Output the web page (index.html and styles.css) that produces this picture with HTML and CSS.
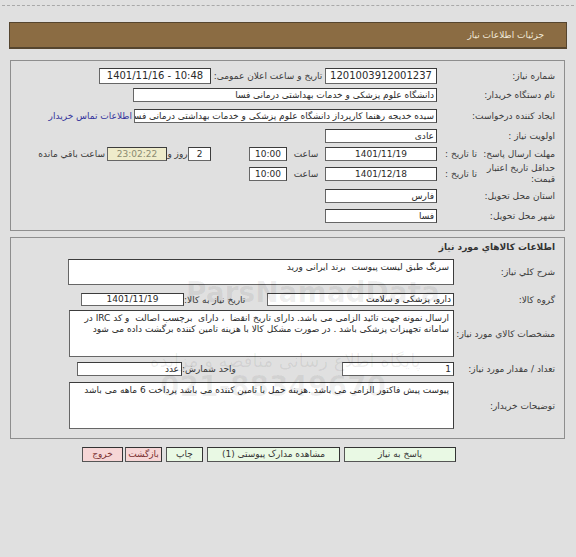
FILE: index.html
```html
<!DOCTYPE html>
<html lang="fa" dir="rtl">
<head>
<meta charset="utf-8">
<title>جزئیات اطلاعات نیاز</title>
<link rel="stylesheet" href="styles.css">
</head>
<body>
<div class="topline"></div>
<div class="header">جزئیات اطلاعات نیاز</div>

<section class="panel p1">
  <div class="row h19">
    <div class="lbl">شماره نیاز:</div>
    <div class="cell">
      <span class="box tall w112 c">1201003912001237</span>
      <span class="txt w114 c">تاریخ و ساعت اعلان عمومی:</span>
      <span class="box tall w112 c ltr">1401/11/16 - 10:48</span>
    </div>
  </div>
  <div class="row h20">
    <div class="lbl">نام دستگاه خریدار:</div>
    <div class="cell">
      <span class="box w304">دانشگاه علوم پزشکی و خدمات بهداشتی درمانی فسا</span>
    </div>
  </div>
  <div class="row h21">
    <div class="lbl">ایجاد کننده درخواست:</div>
    <div class="cell">
      <span class="box w303">سیده خدیجه رهنما کارپرداز دانشگاه علوم پزشکی و خدمات بهداشتی درمانی فسا</span>
      <a class="link" href="#">اطلاعات تماس خریدار</a>
    </div>
  </div>
  <div class="row h19">
    <div class="lbl">اولویت نیاز :</div>
    <div class="cell">
      <span class="box w112">عادی</span>
    </div>
  </div>
  <div class="row h18">
    <div class="lbl split"><span>مهلت ارسال پاسخ:</span><span>تا تاریخ :</span></div>
    <div class="cell">
      <span class="box w112 c">1401/11/19</span>
      <span class="txt w38 c">ساعت</span>
      <span class="box w38 c">10:00</span>
      <span class="spacer"></span>
      <span class="box w23 c">2</span>
      <span class="txt w21 c">روز و</span>
      <span class="box w60 c remain">23:02:22</span>
      <span class="txt pad2">ساعت باقي مانده</span>
    </div>
  </div>
  <div class="row h22">
    <div class="lbl split"><span class="two">حداقل تاریخ اعتبار<br>قیمت:</span><span>تا تاریخ :</span></div>
    <div class="cell">
      <span class="box w112 c">1401/12/18</span>
      <span class="txt w38 c">ساعت</span>
      <span class="box w38 c">10:00</span>
    </div>
  </div>
  <div class="row h22">
    <div class="lbl">استان محل تحویل:</div>
    <div class="cell">
      <span class="box w112">فارس</span>
    </div>
  </div>
  <div class="row h18">
    <div class="lbl">شهر محل تحویل:</div>
    <div class="cell">
      <span class="box w112">فسا</span>
    </div>
  </div>
</section>

<section class="panel p2">
  <div class="title">اطلاعات کالاهاي مورد نياز</div>
  <div class="row2 mt2">
    <div class="lbl">شرح کلي نياز:</div>
    <div class="cell">
      <div class="area w386 h26">سرنگ طبق لیست پیوست&nbsp; برند ایرانی ورید</div>
    </div>
  </div>
  <div class="row2 mt8">
    <div class="lbl">گروه کالا:</div>
    <div class="cell">
      <span class="box w187 h13">دارو، پزشکی و سلامت</span>
      <span class="txt w83 l">تاریخ نیاز به کالا:</span>
      <span class="box w103 h13 c">1401/11/19</span>
    </div>
  </div>
  <div class="row2 mt4">
    <div class="lbl">مشخصات کالاي مورد نياز:</div>
    <div class="cell">
      <div class="area w385 h47">ارسال نمونه جهت تائید الزامی می باشد. دارای تاریخ انقضا&nbsp; ، دارای&nbsp; برچسب اصالت&nbsp; و کد IRC در<br>سامانه تجهیزات پزشکی باشد . در صورت مشکل کالا با هزینه تامین کننده برگشت داده می شود</div>
    </div>
  </div>
  <div class="row2 mt5">
    <div class="lbl">تعداد / مقدار مورد نیاز:</div>
    <div class="cell">
      <span class="box w112">1</span>
      <span class="txt w160 l">واحد شمارش:</span>
      <span class="box w105">عدد</span>
    </div>
  </div>
  <div class="row2 mt6">
    <div class="lbl">توضیحات خریدار:</div>
    <div class="cell">
      <div class="area w385 h47">پیوست پیش فاکتور الزامی می باشد .هزینه حمل با تامین کننده می باشد پرداخت 6 ماهه می باشد</div>
    </div>
  </div>
</section>

<div class="buttons">
  <button class="btn ok w112">پاسخ به نیاز</button>
  <button class="btn ok w133">مشاهده مدارک پیوستی (1)</button>
  <button class="btn ok w37">چاپ</button>
  <button class="btn no w37">بازگشت</button>
  <button class="btn no w41 tight">خروج</button>
</div>

<div class="watermark" aria-hidden="true">
  <div class="wm-latin">ParsNamadData</div>
  <div class="wm-fa">پایگاه اطلاع رسانی مناقصه و مزایده</div>
  <div class="wm-num">021-88349670</div>
</div>
</body>
</html>
```

FILE: styles.css
```css
* { box-sizing: border-box; }

html, body {
  margin: 0;
  padding: 0;
}

body {
  position: relative;
  width: 576px;
  height: 557px;
  overflow: hidden;
  background: #e0e0e0;
  font-family: "DejaVu Sans", sans-serif;
  font-size: 9px;
  color: #333;
  direction: rtl;
  padding-top: 5px;
}

.topline {
  margin: 0 2px;
  border-top: 1px dashed #a9a9a9;
}

.header {
  margin: 16px 9px 0 9px;
  height: 27px;
  background: #8b6c43;
  border: 1px solid #55452f;
  border-bottom-width: 2px;
  color: #f1e9d8;
  font-size: 9px;
  line-height: 24px;
  padding-right: 22px;
}

.panel {
  margin: 11px 11px 0 10px;
  border: 1px solid #8e8e8e;
  padding: 5px 0;
}

.p2 {
  margin-top: 6px;
  padding: 0 0 9px 0;
}

.row {
  display: grid;
  grid-template-columns: 127px 1fr;
  align-items: center;
}

.row2 {
  display: grid;
  grid-template-columns: 110px 1fr;
  align-items: center;
}

.h18 { height: 18px; }
.h19 { height: 19px; }
.h20 { height: 20px; }
.h21 { height: 21px; }
.h22 { height: 22px; }

.mt2 { margin-top: 2px; }
.mt4 { margin-top: 4px; }
.mt5 { margin-top: 5px; }
.mt6 { margin-top: 6px; }
.mt8 { margin-top: 8px; }

.lbl {
  padding-right: 9px;
  color: #3a3a3a;
  white-space: nowrap;
}

.lbl.split {
  display: flex;
  justify-content: space-between;
  align-items: center;
  padding-left: 8px;
}

.two {
  line-height: 11px;
}

.title {
  height: 19px;
  line-height: 19px;
  padding-right: 9px;
  font-weight: bold;
  color: #333;
}

.cell {
  display: flex;
  align-items: center;
}

.box {
  display: block;
  flex: none;
  height: 14px;
  line-height: 12px;
  background: #fff;
  border: 1px solid #666;
  border-top-color: #3c3c3c;
  border-right-color: #3c3c3c;
  padding: 0 2px;
  color: #2a2a2a;
  white-space: nowrap;
  overflow: hidden;
}

.box.tall {
  height: 16px;
  line-height: 14px;
  font-size: 10px;
}

.box.h13 { height: 13px; line-height: 11px; }

.ltr { direction: ltr; }

.area {
  flex: none;
  background: #fff;
  border: 1px solid #666;
  border-top-color: #3c3c3c;
  border-right-color: #3c3c3c;
  padding: 2px 4px;
  line-height: 11px;
  color: #2a2a2a;
  overflow: hidden;
  white-space: nowrap;
}

.h26 { height: 26px; }
.h47 { height: 47px; }

.c { text-align: center; }
.l { text-align: left; }

.remain {
  background: #efeccb;
  color: #8a8a70;
}

.txt {
  flex: none;
  white-space: nowrap;
  color: #3a3a3a;
}

.pad2 { margin-right: 2px; }

.spacer {
  flex: none;
  width: 38px;
}

.link {
  margin-right: 2px;
  color: #34349c;
  text-decoration: none;
  white-space: nowrap;
}

.w21 { width: 21px; }
.w23 { width: 23px; }
.w37 { width: 37px; }
.w38 { width: 38px; }
.w41 { width: 41px; }
.w60 { width: 60px; }
.w83 { width: 83px; }
.w103 { width: 103px; }
.w105 { width: 105px; }
.w112 { width: 112px; }
.w114 { width: 114px; }
.w133 { width: 133px; }
.w160 { width: 160px; }
.w187 { width: 187px; }
.w303 { width: 303px; }
.w304 { width: 304px; }
.w385 { width: 385px; }
.w386 { width: 386px; }

.buttons {
  display: flex;
  gap: 4px;
  margin: 8px 120px 0 0;
}

.btn {
  height: 15px;
  padding: 0;
  font-family: "DejaVu Sans", sans-serif;
  font-size: 9px;
  line-height: 13px;
  border: 1px solid #555;
  border-top-color: #333;
  border-right-color: #333;
  color: #333;
}

.btn.ok { background: #e9f9e4; }
.btn.no { background: #f6d6d6; color: #7a3030; }
.btn.tight { margin-right: -2px; }

.watermark {
  position: absolute;
  inset: 0;
  pointer-events: none;
}

.wm-latin {
  position: absolute;
  left: 186px;
  top: 276px;
  font-family: "DejaVu Sans", sans-serif;
  font-weight: bold;
  font-size: 28px;
  color: rgba(0, 0, 0, 0.07);
  direction: ltr;
}

.wm-fa {
  position: absolute;
  left: 150px;
  top: 350px;
  font-size: 18px;
  color: rgba(0, 0, 0, 0.07);
}

.wm-num {
  position: absolute;
  left: 160px;
  top: 370px;
  direction: ltr;
  font-size: 28px;
  font-weight: bold;
  color: rgba(0, 0, 0, 0.06);
}
```
